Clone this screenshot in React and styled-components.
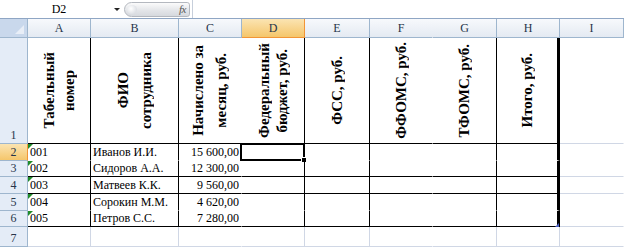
import React from "react";
import styled, { createGlobalStyle, css } from "styled-components";

const GlobalStyle = createGlobalStyle`
  html, body {
    margin: 0;
    padding: 0;
    background: #ffffff;
    font-family: "Liberation Serif", "Times New Roman", serif;
  }
`;

const GRID = "#d0d7e5";
const HEAD_LINE = "#9eb6ce";

const Sheet = styled.div`
  width: 624px;
  height: 247px;
  overflow: hidden;
  background: #ffffff;
`;

const FormulaBar = styled.div`
  display: flex;
  align-items: center;
  height: 18px;
  border-bottom: 1px solid #8fa6c4;
  background: #ffffff;
`;

const NameBox = styled.div`
  position: relative;
  width: 124px;
  height: 18px;
  display: flex;
  align-items: center;
  justify-content: center;
  padding-right: 6px;
  box-sizing: border-box;
  font-size: 12px;
  color: #000;
`;

const DropArrow = styled.span`
  position: absolute;
  right: 4px;
  top: 8px;
  width: 0;
  height: 0;
  border-left: 3px solid transparent;
  border-right: 3px solid transparent;
  border-top: 3px solid #222;
`;

const FxPill = styled.div`
  position: relative;
  width: 66px;
  height: 15px;
  box-sizing: border-box;
  border: 1px solid #b4b8bf;
  border-radius: 8px 3px 3px 8px;
  background: linear-gradient(#fbfbfb, #e2e4e8 60%, #d6d9de);
  display: flex;
  align-items: center;
  justify-content: flex-end;
  padding-right: 3px;
`;

const Knob = styled.span`
  position: absolute;
  left: 2px;
  top: 2px;
  width: 10px;
  height: 9px;
  border-radius: 50%;
  background: radial-gradient(circle at 40% 40%, #ffffff, #cfd3da);
`;

const Fx = styled.span`
  font-style: italic;
  font-size: 11px;
  color: #555;
  letter-spacing: -0.5px;
`;

const FormulaInput = styled.div`
  flex: 1;
  height: 18px;
  margin-left: 2px;
  border-left: 1px solid #c7cfdb;
`;

const Grid = styled.div`
  display: grid;
  grid-template-columns: 28px 63px 88px 63px 63px 65px 63px 64px 63px 64px;
  grid-template-rows: 19px 106px 17px 16px 17px 17px 16px 20px;
`;

const lineCss = (v) => {
  if (v === "k") return "1px solid #000";
  if (v === "K") return "3px solid #000";
  if (v === "g") return `1px solid ${GRID}`;
  return "1px solid transparent";
};

const ColHead = styled.div`
  box-sizing: border-box;
  display: flex;
  align-items: center;
  justify-content: center;
  font-size: 12px;
  color: #27354a;
  border-bottom: 1px solid ${HEAD_LINE};
  border-right: 1px solid ${(p) => (p.$noSep ? "transparent" : HEAD_LINE)};
  background: linear-gradient(#f7f9fc, #e4eaf2);
  ${(p) =>
    p.$active &&
    css`
      background: linear-gradient(#fbe4b2, #f5c66b);
      border-bottom-color: #f29536;
      border-right-color: #f29536;
    `}
`;

const Corner = styled.div`
  position: relative;
  box-sizing: border-box;
  background: #c9d8ec;
  border-right: 1px solid ${HEAD_LINE};
  border-bottom: 1px solid ${HEAD_LINE};
  &::after {
    content: "";
    position: absolute;
    right: 3px;
    bottom: 3px;
    width: 0;
    height: 0;
    border-left: 9px solid transparent;
    border-bottom: 9px solid #e8eef7;
  }
`;

const RowHead = styled.div`
  box-sizing: border-box;
  display: flex;
  align-items: flex-end;
  justify-content: center;
  padding-bottom: 0;
  font-size: 12px;
  color: #27354a;
  background: #e4ecf7;
  border-right: 1px solid ${HEAD_LINE};
  border-bottom: 1px solid ${HEAD_LINE};
  ${(p) =>
    p.$active &&
    css`
      background: linear-gradient(#fbe4b2, #f5c66b);
      border-right-color: #f29536;
    `}
`;

const Cell = styled.div`
  position: relative;
  box-sizing: border-box;
  display: flex;
  align-items: center;
  justify-content: ${(p) => (p.$num ? "flex-end" : "flex-start")};
  padding: 0 2px;
  font-size: 12px;
  color: #000;
  white-space: nowrap;
  border-right: ${(p) => lineCss(p.$r)};
  border-bottom: ${(p) => lineCss(p.$b)};
`;

const TitleCell = styled(Cell)`
  justify-content: center;
  gap: ${(p) => p.$gap}px;
  padding: 0;
`;

const Vertical = styled.span`
  writing-mode: vertical-rl;
  transform: rotate(180deg);
  font-weight: bold;
  font-size: 15px;
  line-height: 17px;
`;

const TextFlag = styled.span`
  position: absolute;
  left: 0;
  top: 0;
  width: 0;
  height: 0;
  border-top: 5px solid #1f8c2a;
  border-right: 5px solid transparent;
`;

const Selection = styled.span`
  position: absolute;
  left: -2px;
  top: -1px;
  right: -1px;
  bottom: -1px;
  border: 2px solid #000;
  pointer-events: none;
  &::after {
    content: "";
    position: absolute;
    right: -4px;
    bottom: -4px;
    width: 4px;
    height: 4px;
    background: #000;
    border: 1px solid #fff;
  }
`;

const CornerMark = styled.span`
  position: absolute;
  right: -2px;
  bottom: -1px;
  width: 0;
  height: 0;
  border-left: 4px solid transparent;
  border-bottom: 4px solid #4a5fc1;
`;

const columns = ["A", "B", "C", "D", "E", "F", "G", "H", "I"];

// right borders for table columns A..I
const tableRight = ["k", "k", "n", "k", "k", "n", "k", "K", "n"];

const titles = [
  { lines: ["Табельный", "номер"], gap: 3 },
  { lines: ["ФИО", "сотрудника"], gap: 6 },
  { lines: ["Начислено за", "месяц, руб."], gap: 6 },
  { lines: ["Федеральный", "бюджет, руб."], gap: 1 },
  { lines: ["ФСС, руб."], gap: 0 },
  { lines: ["ФФОМС, руб."], gap: 0 },
  { lines: ["ТФОМС, руб."], gap: 0 },
  { lines: ["Итого, руб."], gap: 0 },
  { lines: [], gap: 0 },
];

const people = [
  { id: "001", name: "Иванов И.И.", sum: "15 600,00", bottom: "n" },
  { id: "002", name: "Сидоров А.А.", sum: "12 300,00", bottom: "k" },
  { id: "003", name: "Матвеев К.К.", sum: "9 560,00", bottom: "k" },
  { id: "004", name: "Сорокин М.М.", sum: "4 620,00", bottom: "n" },
  { id: "005", name: "Петров С.С.", sum: "7 280,00", bottom: "k" },
];

function App() {
  return (
    <Sheet>
      <GlobalStyle />
      <FormulaBar>
        <NameBox>
          D2
          <DropArrow />
        </NameBox>
        <FxPill>
          <Knob />
          <Fx>fx</Fx>
        </FxPill>
        <FormulaInput />
      </FormulaBar>
      <Grid>
        <Corner />
        {columns.map((c) => (
          <ColHead key={c} $active={c === "D"} $noSep={c === "F"}>
            {c}
          </ColHead>
        ))}

        <RowHead>1</RowHead>
        {titles.map((t, i) => (
          <TitleCell
            key={i}
            $gap={t.gap}
            $r={tableRight[i]}
            $b={i === 8 ? "g" : "k"}
          >
            {t.lines.map((line) => (
              <Vertical key={line}>{line}</Vertical>
            ))}
          </TitleCell>
        ))}

        {people.map((p, r) => (
          <React.Fragment key={p.id}>
            <RowHead $active={r === 0}>{r + 2}</RowHead>
            <Cell $r="k" $b={p.bottom}>
              <TextFlag />
              {p.id}
            </Cell>
            <Cell $r="k" $b={p.bottom}>
              {p.name}
            </Cell>
            <Cell $num $r="n" $b={p.bottom}>
              {p.sum}
            </Cell>
            {tableRight.slice(3).map((rv, i) => (
              <Cell
                key={i}
                $r={rv}
                $b={i === 5 ? (p.bottom === "k" ? "g" : "n") : p.bottom}
              >
                {i === 0 && r === 0 && <Selection />}
                {i === 4 && r === 4 && <CornerMark />}
              </Cell>
            ))}
          </React.Fragment>
        ))}

        <RowHead>7</RowHead>
        {tableRight.map((rv, i) => (
          <Cell key={i} $r={rv === "n" ? "n" : "g"} $b="g" />
        ))}
      </Grid>
    </Sheet>
  );
}

export default App;
